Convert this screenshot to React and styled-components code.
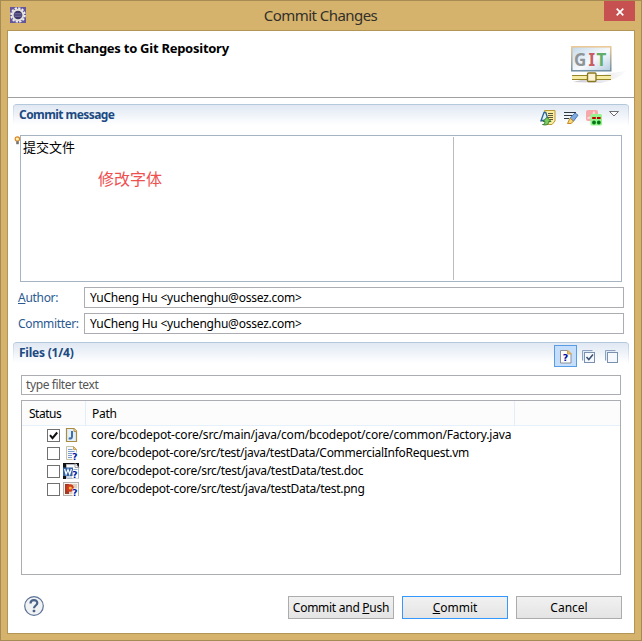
import React from "react"
import styled, { createGlobalStyle } from "styled-components"

const colors = {
    frame: "#d5b36c",
    frameEdge: "#a68b52",
    white: "#ffffff",
    mainText: "#000000",
    label: "#2b5a91",
    heading: "#1c4a82",
    border: "#abadb3",
    close: "#c75050",
}

const GlobalStyle = createGlobalStyle`
  * {
    box-sizing: border-box;
  }
  body {
    margin: 0;
    font-family: "Noto Sans", "Noto Sans CJK SC", sans-serif;
    font-size: 12px;
    color: ${colors.mainText};
  }
  svg {
    display: block;
    flex: none;
    overflow: visible;
  }
`

const Window = styled.div`
  width: 642px;
  height: 641px;
  display: flex;
  flex-direction: column;
  background: ${colors.frame};
  border: 1px solid ${colors.frameEdge};
  padding: 0 6px 6px;
  overflow: hidden;
`

const TitleBar = styled.div`
  height: 29px;
  flex: none;
  display: grid;
  grid-template-columns: 31px 1fr 31px;
  align-items: start;
  padding-left: 3px;
`

const TitleIcon = styled.div`
  padding-top: 6px;
`

const Title = styled.div`
  text-align: center;
  font-size: 15px;
  line-height: 28px;
  padding-right: 4px;
  letter-spacing: ${p => p.$spacing}px;
  color: #33302a;
`

const CloseButton = styled.button`
  width: 31px;
  height: 20px;
  border: 0;
  padding: 1px 0 0;
  display: flex;
  align-items: center;
  justify-content: center;
  background: ${colors.close};
`

const Client = styled.div`
  flex: 1;
  display: flex;
  flex-direction: column;
  background: ${colors.white};
  border: 1px solid #b39656;
`

const Banner = styled.div`
  height: 67px;
  flex: none;
  display: flex;
  justify-content: space-between;
  border-bottom: 1px solid #a0a0a0;
  padding: 8px 7px 0 6px;
`

const H1 = styled.h1`
  margin: 0;
  font-size: 13px;
  line-height: 18px;
  font-weight: bold;
  letter-spacing: ${p => p.$spacing}px;
`

const Section = styled.section`
  margin: ${p => p.$margin};
`

const SectionHead = styled.div`
  height: 26px;
  display: flex;
  justify-content: space-between;
  border-top: 1px solid #b4c8dc;
  border-radius: 4px 4px 0 0;
  padding: ${p => p.$padding};
  background:
    linear-gradient(#c4d3e3, #ffffff) left top / 1px 20px no-repeat,
    linear-gradient(#b7cce6, #ffffff) right top / 1px 22px no-repeat,
    linear-gradient(#e0e8f3, #ffffff 20px);
`

const SectionTitle = styled.h2`
  margin: 0;
  font-size: 12px;
  line-height: 20px;
  font-weight: bold;
  color: ${colors.heading};
  letter-spacing: ${p => p.$spacing}px;
`

const Tools = styled.div`
  display: flex;
  align-items: flex-start;
  gap: ${p => p.$gap}px;
`

const Tool = styled.div`
  padding-top: ${p => p.$top}px;
`

const ToggleTool = styled.div`
  width: 23px;
  height: 22px;
  margin-right: -5px;
  display: flex;
  align-items: center;
  justify-content: center;
  background: #c4defb;
  border: 1px solid #569de5;
`

const MessageRow = styled.div`
  display: flex;
  padding: 5px 6px 0 2px;
`

const Bulb = styled.div`
  width: 5px;
  padding-top: 1px;
`

const MessageBox = styled.div`
  width: 602px;
  height: 147px;
  border: 1px solid #a5b3c2;
  padding: 1px;
  display: flex;
`

const MessageText = styled.div`
  width: 432px;
  border-right: 1px solid #b9bcc2;
  padding: 0 0 0 1px;
  font-family: "Noto Sans CJK SC", sans-serif;
  font-size: 13px;
  line-height: 20px;
`

const Note = styled.div`
  margin: 11px 0 0 75px;
  font-size: 16px;
  line-height: 20px;
  color: #ee4f4f;
`

const Field = styled.div`
  height: 21px;
  display: grid;
  grid-template-columns: 66px 1fr;
  align-items: center;
  margin: 5px 10px 0 10px;
`

const Label = styled.label`
  color: ${colors.label};
  letter-spacing: ${p => p.$spacing}px;
  white-space: nowrap;
`

const Input = styled.div`
  height: ${p => p.$height || 21}px;
  border: 1px solid ${colors.border};
  padding: 0 5px;
  line-height: ${p => (p.$height || 21) - 2}px;
  letter-spacing: ${p => p.$spacing || 0}px;
`

const Filter = styled(Input)`
  margin: 7px 8px 5px 8px;
  padding: 0 4px;
  color: #555555;
`

const Table = styled.div`
  height: 175px;
  margin: 0 8px;
  border: 1px solid ${colors.border};
`

const TableHead = styled.div`
  height: 25px;
  display: grid;
  grid-template-columns: 64px 429px 1fr;
  background: #fcfcfc;
  border-bottom: 1px solid #e6f0fa;
`

const HeadCell = styled.div`
  padding-left: ${p => p.$indent || 6}px;
  line-height: 25px;
  letter-spacing: ${p => p.$spacing || 0}px;
  border-right: ${p => (p.$last ? "0" : "1px solid #e2eefa")};
`

const FileRow = styled.div`
  height: 18px;
  display: flex;
  align-items: center;
  padding-left: 25px;
`

const Checkbox = styled.div`
  width: 13px;
  height: 13px;
  margin-right: 3px;
  border: 1px solid #707070;
`

const Path = styled.div`
  margin-left: 12px;
  line-height: 18px;
  white-space: nowrap;
  letter-spacing: ${p => p.$spacing}px;
`

const Footer = styled.div`
  display: flex;
  align-items: flex-start;
  gap: 8px;
  padding: 21px 12px 0 16px;
`

const Help = styled.div`
  margin-right: auto;
`

const Button = styled.button`
  width: 106px;
  height: 23px;
  padding: 0;
  font: inherit;
  letter-spacing: ${p => p.$spacing || 0}px;
  color: ${colors.mainText};
  background: linear-gradient(#f1f1f1, #e4e4e4);
  border: 1px solid ${p => (p.$primary ? "#3399ff" : "#acacac")};
`

const Mnemonic = styled.span`
  text-decoration: underline;
  text-underline-offset: 1px;
`

const EclipseIcon = () => (
    <svg width="16" height="16" viewBox="0 0 16 16">
        <rect width="16" height="16" fill="#65559a" />
        <circle cx="8" cy="8" r="6.900" fill="none" stroke="#f0efea" strokeWidth="1.800" strokeDasharray="2.300 1.310" />
        <circle cx="8" cy="8" r="5.300" fill="#3d3768" stroke="#e4e2de" strokeWidth="1.900" />
        <path d="M4.500 6.500h7M4 8h8M4.500 9.500h7" stroke="#8279ac" strokeWidth=".7" />
    </svg>
)

const GitBanner = () => (
    <svg width="56" height="42" viewBox="0 0 56 42">
        <defs>
            <linearGradient id="board" x1="0" y1="0" x2="1" y2="1">
                <stop offset="0" stopColor="#c3d9eb" />
                <stop offset=".55" stopColor="#f7fafc" />
                <stop offset="1" stopColor="#b4cce1" />
            </linearGradient>
            <linearGradient id="boardEdge" x1="0" y1="0" x2="0" y2="1">
                <stop offset="0" stopColor="#ecc48c" />
                <stop offset="1" stopColor="#67889e" />
            </linearGradient>
            <linearGradient id="boardShade" x1="0" y1="0" x2="1" y2="0">
                <stop offset="0" stopColor="#a19eae" stopOpacity=".6" />
                <stop offset="1" stopColor="#ccc9d4" stopOpacity=".1" />
            </linearGradient>
        </defs>
        <path d="M2 36 L40 27 L55 25 Q48 33 30 37 Z" fill="url(#boardShade)" />
        <rect x=".8" y=".8" width="39" height="24" fill="url(#board)" stroke="url(#boardEdge)" strokeWidth="1.400" />
        <g fontFamily="Noto Sans" fontSize="17" fontWeight="bold">
            <text x="3" y="19.500" fill="#8f9496">G</text>
            <text x="17.500" y="19.500" fill="#c95d62">I</text>
            <text x="25.500" y="19.500" fill="#62ad6a">T</text>
        </g>
        <path d="M1 29.500h39M1 33.500h39" stroke="#978528" strokeWidth="1" />
        <path d="M1 31.500h39" stroke="#f5eda5" strokeWidth="3" />
        <rect x="16.500" y="27" width="8.500" height="8.500" rx="1" fill="#fbf3d3" stroke="#8a7722" strokeWidth="1.400" />
    </svg>
)

const AmendIcon = () => (
    <svg width="16" height="16" viewBox="0 0 16 16">
        <path d="M4.500 .5h10.500v10.500l-3 3.500H6z" fill="#fbeda0" stroke="#b99a38" />
        <path d="M8 3.500h5M8 5.500h5M8 7.500h5M9 9.500h4" stroke="#5c563f" />
        <path d="M.7 11.500L4 2.500h1.800L7.500 8" fill="#e3f0fb" stroke="#2a6595" strokeWidth="1.300" />
        <path d="M1 10.500h5" stroke="#2a6595" strokeWidth="1.600" />
        <path d="M2.500 14.500C4.500 14.500 5 13 4.800 11.500H3L7 7.300l4 4.200H8.700c.3 2.700-2 4.200-6.200 3z" fill="#7bcb60" stroke="#347a30" strokeWidth="1" />
    </svg>
)

const SignIcon = () => (
    <svg width="16" height="16" viewBox="0 0 16 16">
        <path d="M1 2.500h12M1 5.500h9M1 8.500h5" stroke="#30363f" strokeWidth="1.200" />
        <path d="M12 3l3 2.200-4.500 6-3.500-3z" fill="#83aade" stroke="#4a7bc0" />
        <path d="M7 8.200l3.500 3L8 13.500H4.500z" fill="#f8d777" stroke="#c28a26" />
    </svg>
)

const ChangeIdIcon = () => (
    <svg width="16" height="17" viewBox="0 0 16 17">
        <rect x="0" y="1" width="12" height="11" rx="2" fill="#f7a8aa" />
        <path d="M1.500 9C6 9 8 6 8 2.500" stroke="#fcdcdc" strokeWidth="2" fill="none" />
        <rect x="4.500" y="5" width="11.500" height="11.500" rx="1.500" fill="#94f58e" />
        <path d="M6.200 9h3.600M11 9h3.600" stroke="#c00000" strokeWidth="2" />
        <g fill="#067818">
            <circle cx="8" cy="13.500" r="1.900" />
            <circle cx="12.800" cy="13.500" r="1.900" />
        </g>
    </svg>
)

const MenuArrow = () => (
    <svg width="10" height="6" viewBox="0 0 10 6">
        <path d="M.5 .5h9L5 5z" fill="#fff" stroke="#6b6d72" />
    </svg>
)

const BulbIcon = () => (
    <svg width="5" height="10" viewBox="0 0 5 10">
        <circle cx="2.400" cy="3" r="2.200" fill="#fff0b8" stroke="#d78722" strokeWidth="1.200" />
        <rect x="1.200" y="5.200" width="2.600" height="3" fill="#75736c" />
    </svg>
)

const UntrackedIcon = () => (
    <svg width="12" height="15" viewBox="0 0 12 15">
        <path d="M.5 1.500h7l3.500 3.500v9H.5z" fill="#fbfdff" stroke="#8d9099" />
        <path d="M7.500 1v4h4z" fill="#edc469" stroke="#d3a34f" />
        <text x="2.700" y="12.300" fontFamily="DejaVu Sans" fontSize="9.500" fontWeight="bold" fill="#000c9c">?</text>
    </svg>
)

const BoxesIcon = ({ checked }) => (
    <svg width="13" height="13" viewBox="0 0 13 13">
        <path d="M.5 10.500V.5h10" fill="none" stroke="#8ba1bd" />
        <path d="M1 10.500V1h9.500v1.500H2.500v8z" fill="#dfeaf5" />
        <rect x="2.500" y="2.500" width="10" height="10" fill="#f5f9fe" stroke="#7b8fae" />
        {checked && <path d="M4.500 7l2.300 2.500L11 4.500" fill="none" stroke="#39506f" strokeWidth="1.500" />}
    </svg>
)

const QuestionBadge = () => (
    <g>
        <rect x="9.500" y="7.500" width="5.500" height="8" fill="#fff" />
        <text x="9.300" y="14.800" fontFamily="DejaVu Sans" fontSize="9" fontWeight="bold" fill="#0018a4">?</text>
    </g>
)

const JavaIcon = () => (
    <svg width="16" height="16" viewBox="0 0 16 16">
        <path d="M3.500 1.500h7.500l2.500 2.500v10.500h-10z" fill="#e3effa" stroke="#a98c42" strokeWidth="1.200" />
        <path d="M11 1.500v3h2.500" fill="#f5deb0" stroke="#b9934a" />
        <path d="M9 4v5.500c0 1.800-1.200 2.300-3.300 1.800" fill="none" stroke="#3c71a8" strokeWidth="2" />
    </svg>
)

const TextIcon = () => (
    <svg width="16" height="16" viewBox="0 0 16 16">
        <path d="M3.500 1.500h7l3 3v10h-10z" fill="#f5f9fe" stroke="#c6c0a4" />
        <path d="M10.500 1.500v3h3z" fill="#f0cf8f" stroke="#c9a45a" />
        <path d="M5 4.500h4.500M5 6.500h6.500M5 8.500h5M5 10.500h4M5 12.500h4" stroke="#7f9fca" />
        <QuestionBadge />
    </svg>
)

const WordIcon = () => (
    <svg width="16" height="16" viewBox="0 0 16 16">
        <path d="M0 0h16v6h-2V1H4v4H0zM0 13h3v3H0z" fill="#111" />
        <path d="M3.500 1.500h8.500l3.500 3.500v10.500h-12z" fill="#f9fbfd" stroke="#b4bac2" />
        <path d="M12 .5v4h4z" fill="#fff" stroke="#8b9098" strokeWidth=".8" />
        <path d="M10.500 6.500h4M4 14h5" stroke="#9db4d0" />
        <rect x="0" y="4.500" width="10" height="8.500" fill="#3261a4" />
        <path d="M1.600 6l1.500 5.300L5 6.500l1.700 4.800L8.400 6" fill="none" stroke="#f6fafe" strokeWidth="1.300" />
        <QuestionBadge />
    </svg>
)

const ImageIcon = () => (
    <svg width="16" height="16" viewBox="0 0 16 16">
        <rect x=".5" y="1.500" width="15" height="13" fill="#f6f3ef" stroke="#b4b0ac" />
        <rect x="2" y="3" width="12" height="10" fill="#ddd0bd" />
        <path d="M2 3h4v10H2z" fill="#a03a24" />
        <circle cx="7" cy="7" r="3.800" fill="#cf3a20" />
        <circle cx="7.300" cy="7" r="1.600" fill="#f1bb40" />
        <QuestionBadge />
    </svg>
)

const HelpIcon = () => (
    <svg width="20" height="20" viewBox="0 0 20 20">
        <circle cx="10" cy="10" r="9.300" fill="#f1f2f4" stroke="#5d7397" strokeWidth="1.200" />
        <path d="M6.500 7.500C6.500 3 13.500 3.200 13.300 7.200 13.100 9.600 10 9.500 10 12.300" fill="none" stroke="#4a6287" strokeWidth="2.200" />
        <rect x="8.700" y="13.800" width="2.600" height="2.500" rx=".8" fill="#4a6287" />
    </svg>
)

const files = [
    { path: "core/bcodepot-core/src/main/java/com/bcodepot/core/common/Factory.java", icon: JavaIcon, checked: true, spacing: -0.183 },
    { path: "core/bcodepot-core/src/test/java/testData/CommercialInfoRequest.vm", icon: TextIcon, spacing: -0.3 },
    { path: "core/bcodepot-core/src/test/java/testData/test.doc", icon: WordIcon, spacing: -0.27 },
    { path: "core/bcodepot-core/src/test/java/testData/test.png", icon: ImageIcon, spacing: -0.28 },
]

export default class App extends React.Component {
    renderFile(file) {
        const Icon = file.icon
        return (
            <FileRow key={file.path}>
                <Checkbox>
                    {file.checked && (
                        <svg width="11" height="11" viewBox="0 0 11 11">
                            <path d="M2 5.200l2.500 3L9.200 2.500" fill="none" stroke="#111" strokeWidth="2" />
                        </svg>
                    )}
                </Checkbox>
                <Icon />
                <Path $spacing={file.spacing}>{file.path}</Path>
            </FileRow>
        )
    }

    render() {
        return (
            <>
                <GlobalStyle />
                <Window>
                    <TitleBar>
                        <TitleIcon><EclipseIcon /></TitleIcon>
                        <Title $spacing={-0.55}>Commit Changes</Title>
                        <CloseButton aria-label="Close">
                            <svg width="8" height="8" viewBox="0 0 8 8">
                                <path d="M.7 .7l6.600 6.600M7.300 .7L.7 7.300" stroke="#fff" strokeWidth="1.700" />
                            </svg>
                        </CloseButton>
                    </TitleBar>
                    <Client>
                        <Banner>
                            <H1 $spacing={-0.26}>Commit Changes to Git Repository</H1>
                            <Tool $top={7}><GitBanner /></Tool>
                        </Banner>
                        <Section $margin="6px 5px 0">
                            <SectionHead $padding="0 10px 0 6px">
                                <SectionTitle $spacing={-0.57}>Commit message</SectionTitle>
                                <Tools $gap={7}>
                                    <Tool $top={5}><AmendIcon /></Tool>
                                    <Tool $top={5}><SignIcon /></Tool>
                                    <Tool $top={4}><ChangeIdIcon /></Tool>
                                    <Tool $top={6}><MenuArrow /></Tool>
                                </Tools>
                            </SectionHead>
                            <MessageRow>
                                <Bulb><BulbIcon /></Bulb>
                                <MessageBox>
                                    <MessageText>
                                        提交文件
                                        <Note>修改字体</Note>
                                    </MessageText>
                                </MessageBox>
                            </MessageRow>
                        </Section>
                        <Field>
                            <Label $spacing={-0.3}><Mnemonic>A</Mnemonic>uthor:</Label>
                            <Input $spacing={-0.23}>YuCheng Hu &lt;yuchenghu@ossez.com&gt;</Input>
                        </Field>
                        <Field>
                            <Label $spacing={-0.33}>Committer:</Label>
                            <Input $spacing={-0.23}>YuCheng Hu &lt;yuchenghu@ossez.com&gt;</Input>
                        </Field>
                        <Section $margin="8px 5px 0">
                            <SectionHead $padding="0 11px 0 6px">
                                <SectionTitle $spacing={-0.22}>Files (1/4)</SectionTitle>
                                <Tools $gap={10}>
                                    <Tool $top={2}><ToggleTool><UntrackedIcon /></ToggleTool></Tool>
                                    <Tool $top={7}><BoxesIcon checked /></Tool>
                                    <Tool $top={7}><BoxesIcon /></Tool>
                                </Tools>
                            </SectionHead>
                            <Filter $height={20} $spacing={-0.4}>type filter text</Filter>
                            <Table>
                                <TableHead>
                                    <HeadCell $indent={7} $spacing={-0.5}>Status</HeadCell>
                                    <HeadCell $spacing={-0.3}>Path</HeadCell>
                                    <HeadCell $last />
                                </TableHead>
                                {files.map(file => this.renderFile(file))}
                            </Table>
                        </Section>
                        <Footer>
                            <Help><HelpIcon /></Help>
                            <Button $spacing={-0.27}>Commit and <Mnemonic>P</Mnemonic>ush</Button>
                            <Button $primary><Mnemonic>C</Mnemonic>ommit</Button>
                            <Button>Cancel</Button>
                        </Footer>
                    </Client>
                </Window>
            </>
        )
    }
}
